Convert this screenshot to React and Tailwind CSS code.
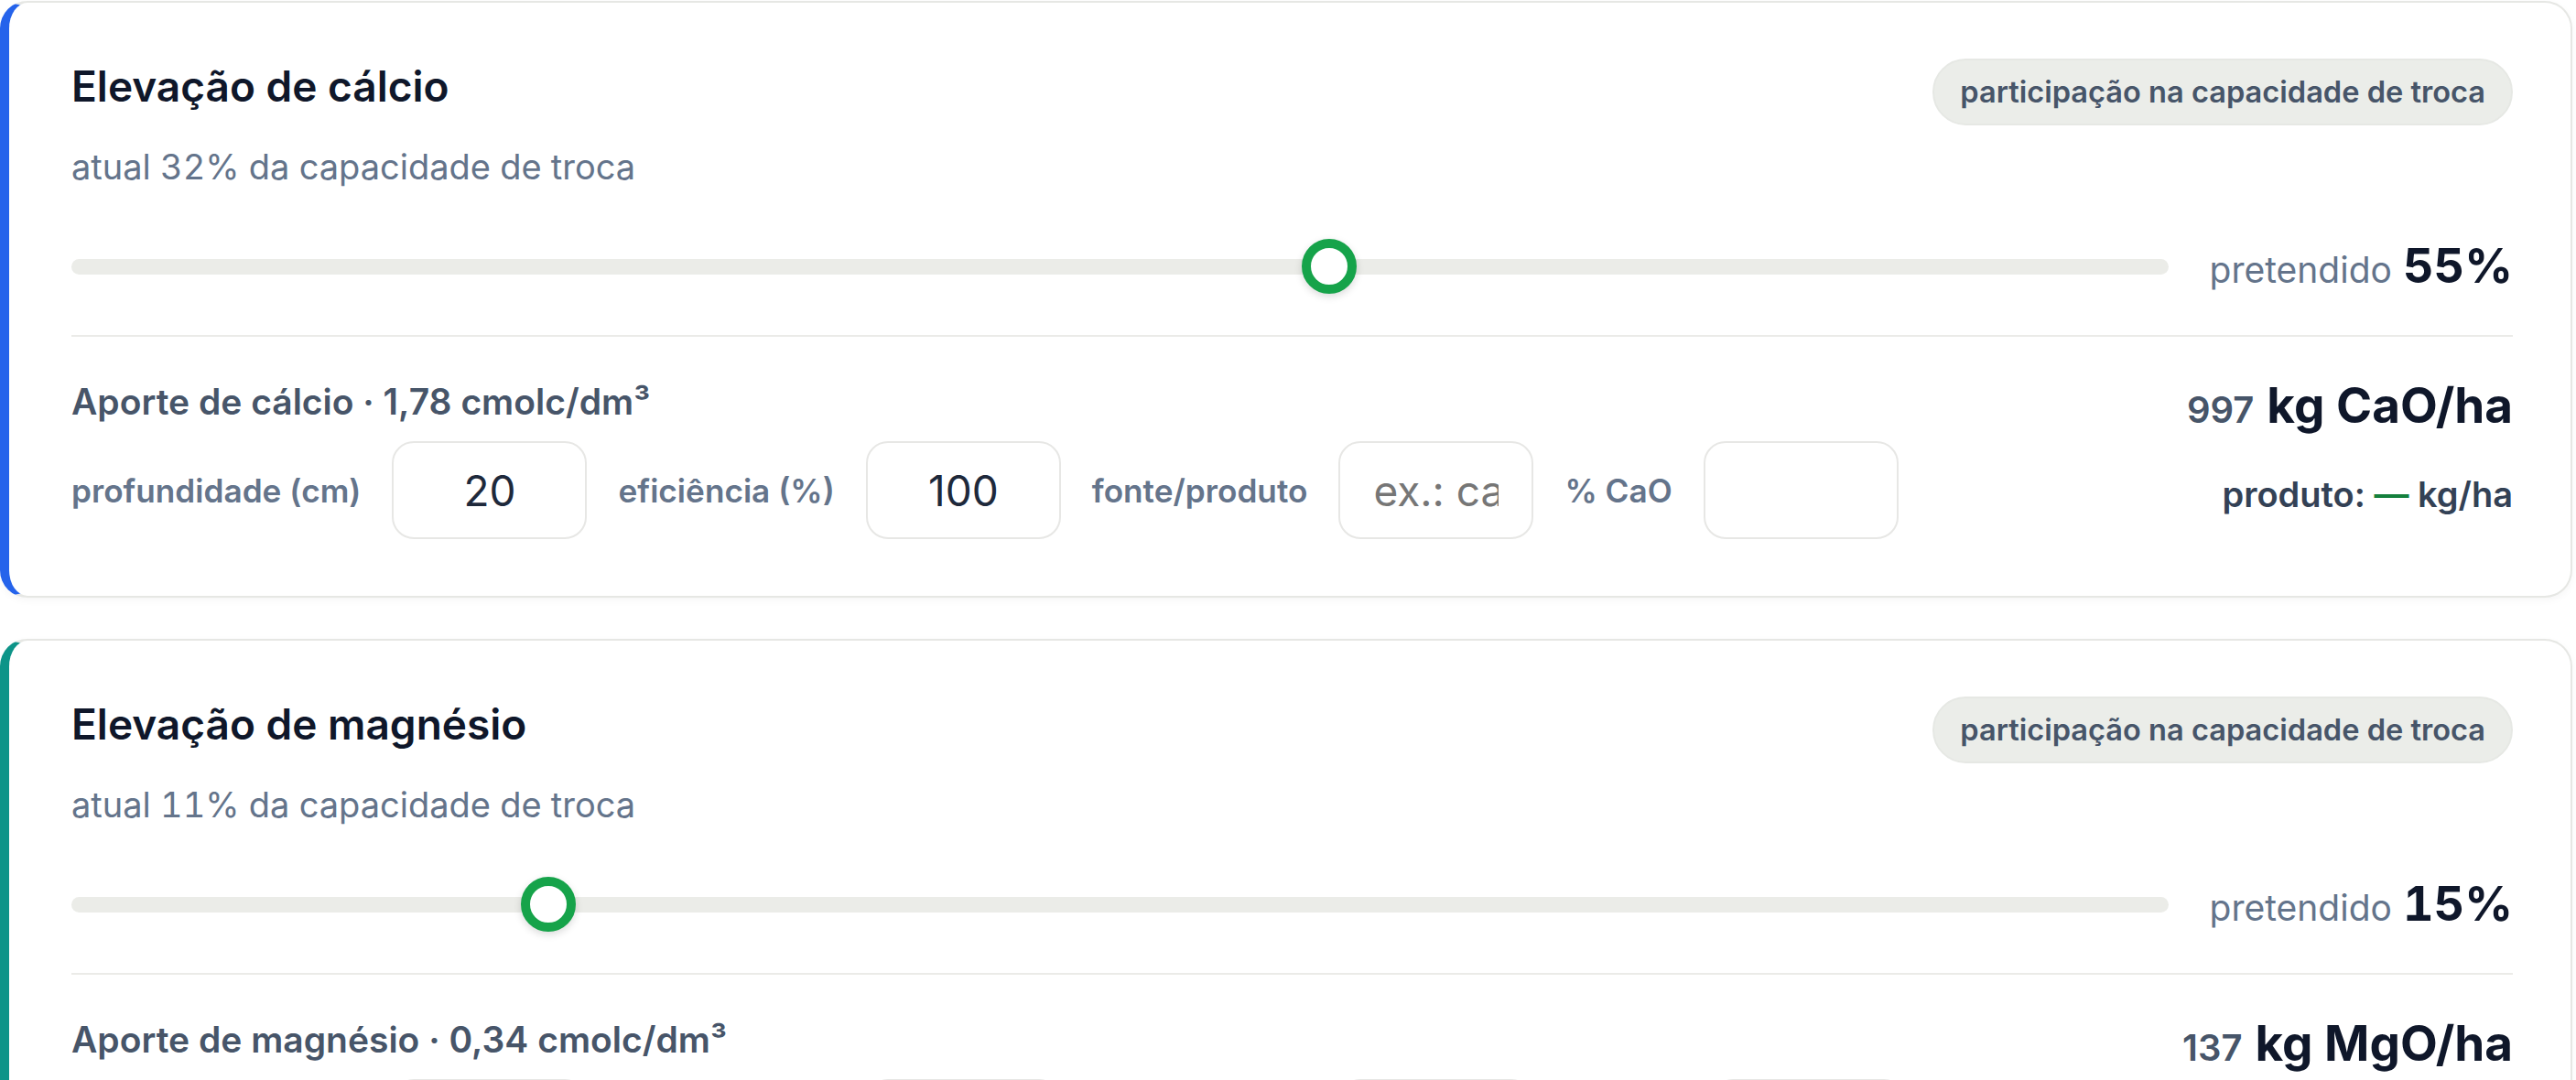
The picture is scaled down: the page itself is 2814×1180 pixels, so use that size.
import React from "react";

const cards = [
  {
    title: "Elevação de cálcio",
    atual: "32%",
    pretendido: "55%",
    pos: 0.6,
    accent: "border-l-[#2563eb]",
    aporte: "Aporte de cálcio · 1,78 cmolc/dm³",
    dose: "997",
    unit: "kg CaO/ha",
    oxide: "% CaO",
  },
  {
    title: "Elevação de magnésio",
    atual: "11%",
    pretendido: "15%",
    pos: 0.2273,
    accent: "border-l-[#0d9488]",
    aporte: "Aporte de magnésio · 0,34 cmolc/dm³",
    dose: "137",
    unit: "kg MgO/ha",
    oxide: "% MgO",
  },
];

const Field = ({ label, value, placeholder }) => (
  <>
    <span className="text-[35.2px] leading-[44px] font-semibold text-[#64748b]">{label}</span>
    <input
      defaultValue={value}
      placeholder={placeholder}
      className="w-[213px] h-[107px] rounded-[24px] border-2 border-[#e7e7e5] bg-white px-[36px] text-center text-[46px] text-[#1e293b] outline-none placeholder:text-[#767676]"
    />
  </>
);

const Card = ({ c }) => (
  <section
    className={`rounded-[30px] border-2 border-[#e6e7e4] border-l-[10px] ${c.accent} bg-white pl-[68px] pr-[63px] pt-[61px] pb-[62px] shadow-[0_3px_8px_rgba(0,0,0,0.04)]`}
  >
    <div className="flex items-start justify-between">
      <div>
        <h2 className="text-[46px] leading-[60px] font-semibold text-[#0f172a]">{c.title}</h2>
        <p className="mt-[34px] text-[38px] leading-[48px] text-[#64748b] tabular-nums">
          atual {c.atual} da capacidade de troca
        </p>
      </div>
      <span className="flex h-[73px] items-center rounded-full border-2 border-[#e6e8e4] bg-[#ebede9] px-[28px] text-[32.6px] font-semibold text-[#475569]">
        participação na capacidade de troca
      </span>
    </div>

    <div className="mt-[53px] flex h-[64px] items-center gap-[45px]">
      <div className="relative h-[17px] flex-1 rounded-full bg-[#ebece8]">
        <div
          className="absolute top-1/2 h-[60px] w-[60px] -translate-x-1/2 -translate-y-1/2 rounded-full border-[10px] border-[#16a34a] bg-white shadow-[0_3px_8px_rgba(0,0,0,0.15)]"
          style={{ left: `${c.pos * 100}%` }}
        />
      </div>
      <div className="flex items-baseline gap-[12px]">
        <span className="text-[39px] text-[#64748b]">pretendido</span>
        <span className="text-[52px] font-bold text-[#0f172a] tabular-nums">{c.pretendido}</span>
      </div>
    </div>

    <div className="mt-[43px] border-t-2 border-[#ebebe8]" />

    <div className="flex items-start justify-between pt-[44px]">
      <div>
        <p className="mt-[3px] text-[39px] leading-[48px] font-semibold text-[#475569]">{c.aporte}</p>
        <div className="mt-[19px] flex items-center gap-[34px]">
          <Field label="profundidade (cm)" value="20" />
          <Field label="eficiência (%)" value="100" />
          <Field label="fonte/produto" placeholder="ex.: calcário" />
          <Field label={c.oxide} />
        </div>
      </div>
      <div className="flex flex-col items-end">
        <div className="flex items-baseline gap-[14px]">
          <span className="text-[40px] font-semibold text-[#475569]">{c.dose}</span>
          <span className="text-[53px] leading-[62px] font-bold text-[#0f172a]">{c.unit}</span>
        </div>
        <p className="mt-[40px] text-[38px] leading-[44px] font-semibold text-[#334155]">
          produto: <span className="text-[#15803d]">—</span> kg/ha
        </p>
      </div>
    </div>
  </section>
);

export default function App() {
  return (
    <div className="flex min-h-screen flex-col gap-[45px] bg-white pt-[1px] pr-[4px] font-['Inter',sans-serif]">
      {cards.map((c) => (
        <Card key={c.title} c={c} />
      ))}
    </div>
  );
}
